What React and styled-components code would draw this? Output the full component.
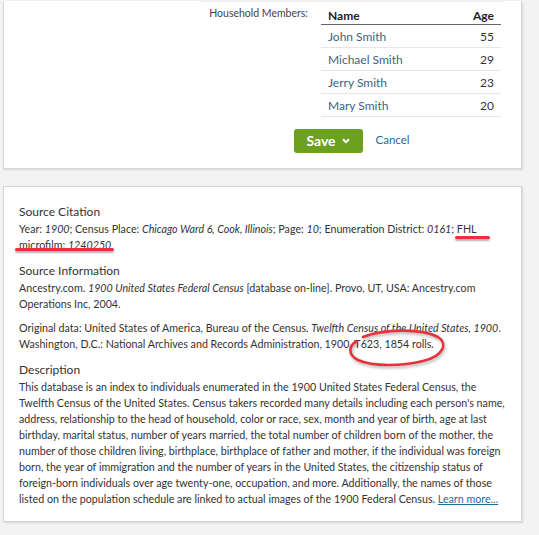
import React from "react"
import styled, { createGlobalStyle } from "styled-components"

const GlobalStyle = createGlobalStyle`
  html, body {
    margin: 0;
    padding: 0;
    background: #f3f3f3;
  }
  body {
    font-family: Lato, "Open Sans", sans-serif;
    color: #333;
  }
`

const Page = styled.div`
  width: 519px;
  padding-left: 3px;
`

const Card = styled.section`
  position: relative;
  background: #fff;
  border: 1px solid #d5d5d5;
  border-top: ${(p) => (p.$open ? "none" : "1px solid #d5d5d5")};
  box-shadow: 1px 1px 2px rgba(0, 0, 0, 0.12);
  margin-bottom: 17px;
  padding: ${(p) => p.$pad || "0"};
`

const FormBlock = styled.div`
  margin: 1px 0 0 196px;
  width: 303px;
  border-top: 1px solid #ececec;
  padding-bottom: 15px;
`

const FormRow = styled.div`
  display: flex;
  align-items: flex-start;
`

const FieldLabel = styled.div`
  width: 121px;
  box-sizing: border-box;
  padding: 4px 13px 0 0;
  text-align: right;
  white-space: nowrap;
  font-size: 10.5px;
  line-height: 14px;
  color: #444;
`

const Members = styled.table`
  width: 180px;
  border-collapse: collapse;
  font-size: 12px;
  line-height: 16px;
`

const HeadCell = styled.th`
  padding: 6px 7px 0;
  height: 16px;
  font-weight: 700;
  color: #222;
  text-align: ${(p) => p.$align || "left"};
  border-bottom: 1px solid #666;
`

const Cell = styled.td`
  padding: 4px 7px 2px;
  height: 16px;
  color: ${(p) => (p.$name ? "#3a6483" : "#333")};
  text-align: ${(p) => p.$align || "left"};
  border-bottom: 1px solid #e6e6e6;
`

const Actions = styled.div`
  display: flex;
  justify-content: center;
  align-items: center;
  gap: 13px;
  margin-top: 12px;
`

const SaveButton = styled.button`
  display: flex;
  align-items: center;
  justify-content: center;
  gap: 6px;
  height: 24px;
  width: 69px;
  border: none;
  border-radius: 3px;
  background: #6ba11e;
  color: #fff;
  font-family: Lato, sans-serif;
  font-weight: 700;
  font-size: 14px;
  padding: 0 0 1px;
`

const TextButton = styled.button`
  border: none;
  background: none;
  padding: 0;
  font-family: Lato, sans-serif;
  font-size: 11.5px;
  color: #21679a;
  margin-top: -3px;
`

const Heading = styled.h3`
  margin: ${(p) => (p.$first ? "0" : "9px 0 0")};
  font-size: 12px;
  line-height: 18px;
  font-weight: 400;
  color: #333;
`

const Para = styled.p`
  margin: ${(p) => (p.$gap ? "8px 0 0" : "0")};
  font-size: 10.7px;
  line-height: 16px;
  color: #333;
`

const Link = styled.a`
  color: #1f6b99;
  text-decoration: underline;
`

const Marked = styled.span`
  position: relative;
  white-space: nowrap;
  &::after {
    content: "";
    position: absolute;
    left: ${(p) => p.$left}px;
    right: ${(p) => p.$right}px;
    bottom: ${(p) => p.$bottom}px;
    height: 3px;
    border-radius: 2px;
    background: #e8313d;
    box-shadow: 0 2px 2px rgba(0, 0, 0, 0.3);
  }
`

const Circled = styled.span`
  position: relative;
  white-space: nowrap;
`

const Ring = styled.svg`
  position: absolute;
  left: -7px;
  top: -8px;
  width: 100px;
  height: 40px;
  overflow: visible;
  pointer-events: none;
`

const members = [
  { name: "John Smith", age: 55 },
  { name: "Michael Smith", age: 29 },
  { name: "Jerry Smith", age: 23 },
  { name: "Mary Smith", age: 20 },
]

const Chevron = () => (
  <svg width="8" height="6" viewBox="0 0 8 6">
    <path d="M1 1.2 L4 4.2 L7 1.2" fill="none" stroke="#fff" strokeWidth="2" />
  </svg>
)

const App = () => {
  return (
    <Page>
      <GlobalStyle />
      <Card $open>
        <FormBlock>
          <FormRow>
            <FieldLabel>Household Members:</FieldLabel>
            <Members>
              <thead>
                <tr>
                  <HeadCell>Name</HeadCell>
                  <HeadCell $align="right">Age</HeadCell>
                </tr>
              </thead>
              <tbody>
                {members.map((m) => (
                  <tr key={m.name}>
                    <Cell $name>{m.name}</Cell>
                    <Cell $align="right">{m.age}</Cell>
                  </tr>
                ))}
              </tbody>
            </Members>
          </FormRow>
          <Actions>
            <SaveButton>
              Save <Chevron />
            </SaveButton>
            <TextButton>Cancel</TextButton>
          </Actions>
        </FormBlock>
      </Card>

      <Card $pad="16px 12px 14px 15px">
        <Heading $first>Source Citation</Heading>
        <Para>
          Year: <i>1900</i>; Census Place: <i>Chicago Ward 6, Cook, Illinois</i>; Page: <i>10</i>;
          Enumeration District: <i>0161</i>;{" "}
          <Marked $left={-2} $right={-13} $bottom={-4}>FHL</Marked>{" "}
          <Marked $left={-4} $right={-3} $bottom={0}>
            microfilm: <i>1240250</i>
          </Marked>
        </Para>

        <Heading>Source Information</Heading>
        <Para>
          Ancestry.com. <i>1900 United States Federal Census</i> [database on-line]. Provo, UT, USA:
          Ancestry.com Operations Inc, 2004.
        </Para>
        <Para $gap>
          Original data: United States of America, Bureau of the Census.{" "}
          <i>Twelfth Census of the United States, 1900</i>. Washington, D.C.: National Archives and
          Records Administration, 1900.{" "}
          <Circled>
            T623, 1854 rolls.
            <Ring viewBox="0 0 100 40">
              <path
                d="M16 8 C36 0, 74 -1, 91 8 C101 14, 97 27, 76 32 C56 37, 26 38, 11 31 C1 26, 1 17, 10 12"
                fill="none"
                stroke="#e8313d"
                strokeWidth="2.6"
                strokeLinecap="round"
                style={{ filter: "drop-shadow(1px 2px 1.5px rgba(0,0,0,0.3))" }}
              />
            </Ring>
          </Circled>
        </Para>

        <Heading>Description</Heading>
        <Para>
          This database is an index to individuals enumerated in the 1900 United States Federal
          Census, the Twelfth Census of the United States. Census takers recorded many details
          including each person's name, address, relationship to the head of household, color or
          race, sex, month and year of birth, age at last birthday, marital status, number of years
          married, the total number of children born of the mother, the number of those children
          living, birthplace, birthplace of father and mother, if the individual was foreign born,
          the year of immigration and the number of years in the United States, the citizenship
          status of foreign-born individuals over age twenty-one, occupation, and more.
          Additionally, the names of those listed on the population schedule are linked to actual
          images of the 1900 Federal Census. <Link href="#">Learn more...</Link>
        </Para>
      </Card>
    </Page>
  )
}

export default App
